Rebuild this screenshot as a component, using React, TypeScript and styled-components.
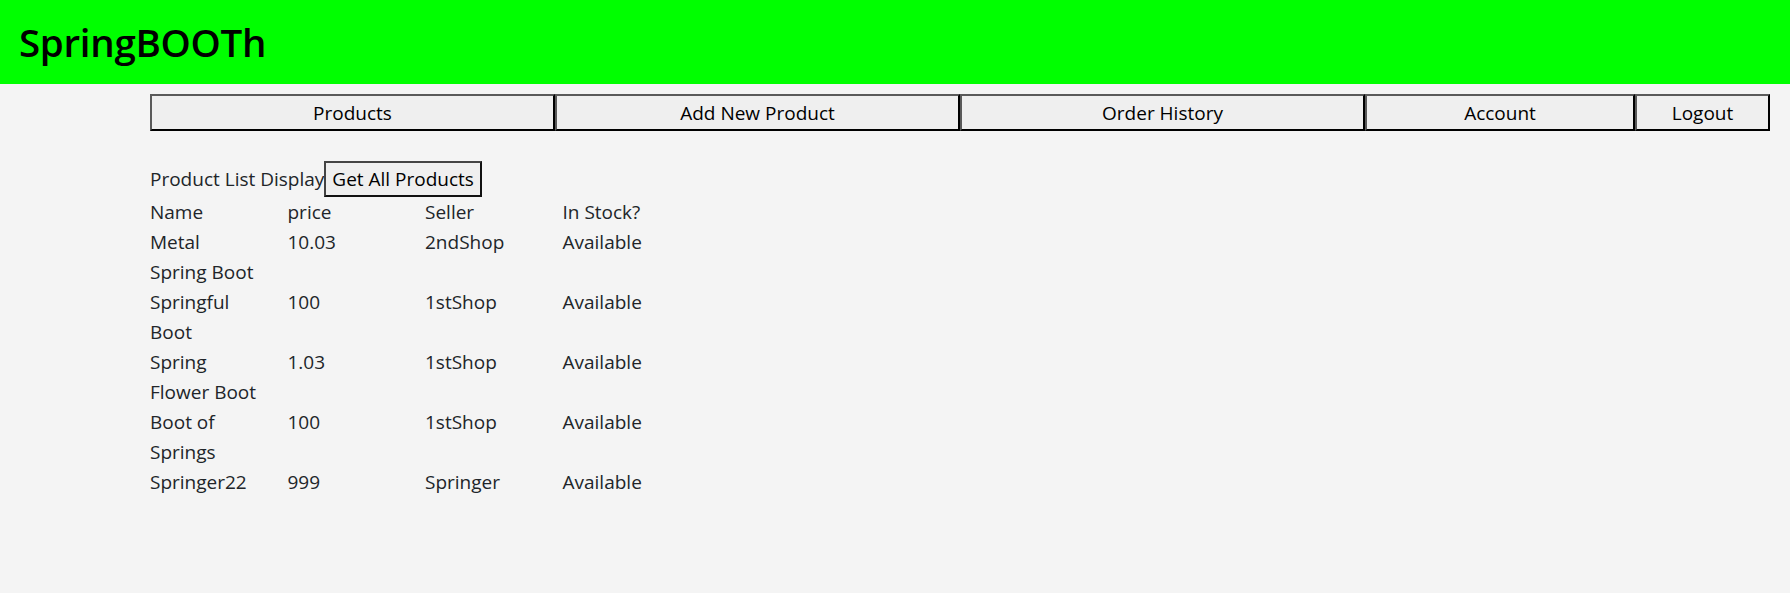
import React, { FC } from 'react'
import styled, { createGlobalStyle } from 'styled-components'

const GlobalStyle = createGlobalStyle`
    body {
        margin: 0;
        background: #f4f4f4;
        font-family: "Open Sans", "Noto Sans", sans-serif;
        font-size: 19px;
        line-height: 30px;
        color: #212529;
    }
`

const Header = styled.header`
    height: 84px;
    background: #00ff00;
    display: flex;
    align-items: center;
    padding-left: 19px;
`

const Title = styled.h1`
    margin: 0;
    font-size: 38.5px;
    font-weight: 600;
    color: #000;
    letter-spacing: -0.3px;
`

const Nav = styled.nav`
    display: grid;
    grid-template-columns: 3fr 3fr 3fr 2fr 1fr;
    margin: 10px 20px 0 150px;
`

const NavButton = styled.button`
    font: inherit;
    line-height: 30px;
    height: 37px;
    padding: 1px 6px;
    background: #efefef;
    color: #000;
    border: 2px solid;
    border-color: #5a5a5a #000 #000 #5a5a5a;
    border-radius: 0;
    cursor: pointer;
`

const Content = styled.main`
    margin: 30px 0 0 150px;
`

const Toolbar = styled.div`
    display: flex;
    align-items: center;
    height: 36px;
`

const Label = styled.span`
    color: #212529;
`

const FetchButton = styled(NavButton)`
    height: 36px;
    border-color: #444 #111 #111 #444;
`

const Table = styled.div`
    display: grid;
    grid-template-columns: repeat(4, 137.5px);
`

const Cell = styled.div`
    padding-right: 29px;
`

const products = [
    { name: 'Metal Spring Boot', price: '10.03', seller: '2ndShop', stock: 'Available' },
    { name: 'Springful Boot', price: '100', seller: '1stShop', stock: 'Available' },
    { name: 'Spring Flower Boot', price: '1.03', seller: '1stShop', stock: 'Available' },
    { name: 'Boot of Springs', price: '100', seller: '1stShop', stock: 'Available' },
    { name: 'Springer22', price: '999', seller: 'Springer', stock: 'Available' },
]

const App: FC = () => {
    return (
        <>
            <GlobalStyle />
            <Header>
                <Title>SpringBOOTh</Title>
            </Header>
            <Nav>
                <NavButton>Products</NavButton>
                <NavButton>Add New Product</NavButton>
                <NavButton>Order History</NavButton>
                <NavButton>Account</NavButton>
                <NavButton>Logout</NavButton>
            </Nav>
            <Content>
                <Toolbar>
                    <Label>Product List Display</Label>
                    <FetchButton>Get All Products</FetchButton>
                </Toolbar>
                <Table>
                    <Cell>Name</Cell>
                    <Cell>price</Cell>
                    <Cell>Seller</Cell>
                    <Cell>In Stock?</Cell>
                    {products.map(p => (
                        <React.Fragment key={p.name}>
                            <Cell>{p.name}</Cell>
                            <Cell>{p.price}</Cell>
                            <Cell>{p.seller}</Cell>
                            <Cell>{p.stock}</Cell>
                        </React.Fragment>
                    ))}
                </Table>
            </Content>
        </>
    )
}

export default App
